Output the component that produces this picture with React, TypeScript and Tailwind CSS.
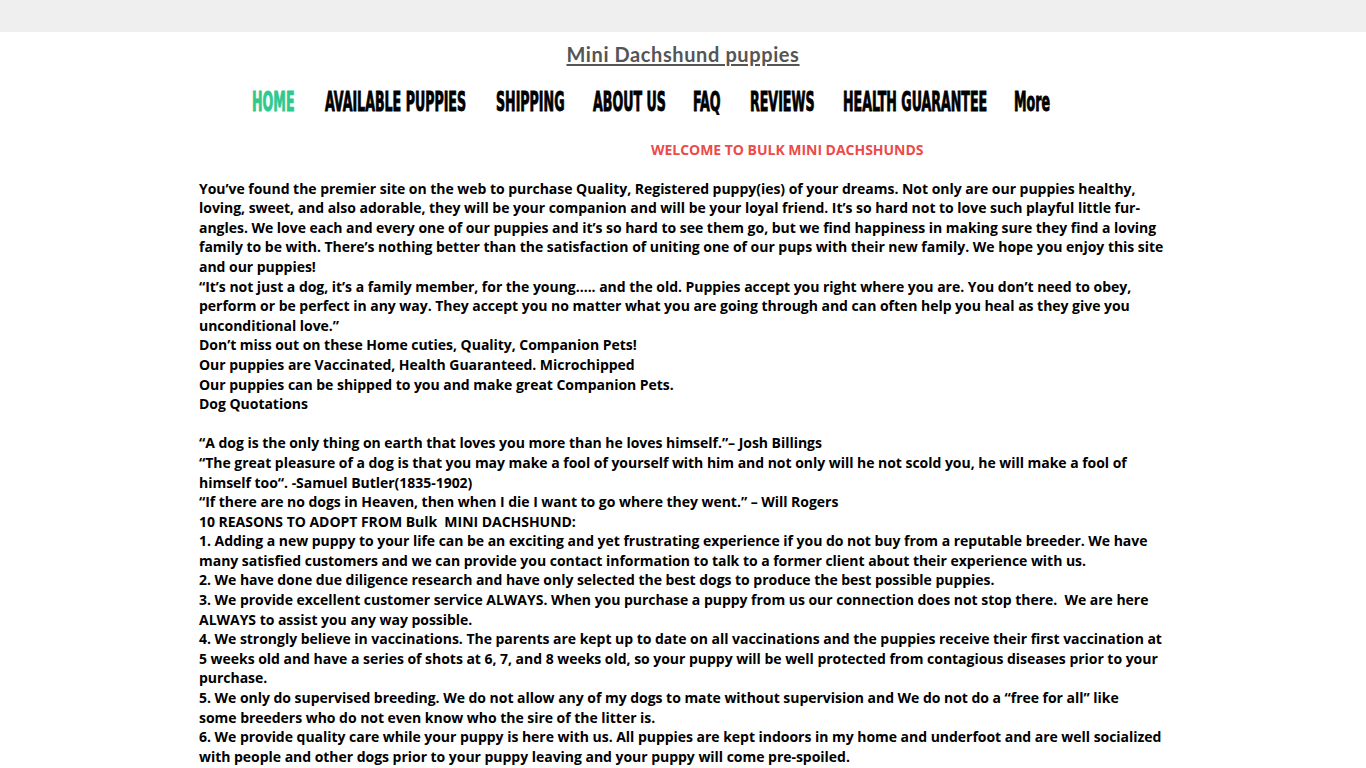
import React from 'react';

const navItems = [
  { label: 'HOME', w: 43 },
  { label: 'AVAILABLE PUPPIES', w: 141 },
  { label: 'SHIPPING', w: 67 },
  { label: 'ABOUT US', w: 70 },
  { label: 'FAQ', w: 27 },
  { label: 'REVIEWS', w: 63 },
  { label: 'HEALTH GUARANTEE', w: 141 },
  { label: 'More', w: 41 },
];

const lines: string[] = [
  'You\u2019ve found the premier site on the web to purchase Quality, Registered puppy(ies) of your dreams. Not only are our puppies healthy, loving, sweet, and also adorable, they will be your companion and will be your loyal friend. It\u2019s so hard not to love such playful little fur-angles. We love each and every one of our puppies and it\u2019s so hard to see them go, but we find happiness in making sure they find a loving family to be with. There\u2019s nothing better than the satisfaction of uniting one of our pups with their new family. We hope you enjoy this site and our puppies!',
  '\u201cIt\u2019s not just a dog, it\u2019s a family member, for the young\u2026.. and the old. Puppies accept you right where you are. You don\u2019t need to obey, perform or be perfect in any way. They accept you no matter what you are going through and can often help you heal as they give you unconditional love.\u201d',
  'Don\u2019t miss out on these Home cuties, Quality, Companion Pets!',
  'Our puppies are Vaccinated, Health Guaranteed. Microchipped',
  'Our puppies can be shipped to you and make great Companion Pets.',
  'Dog Quotations',
  '',
  '\u201cA dog is the only thing on earth that loves you more than he loves himself.\u201d\u2013 Josh Billings',
  '\u201cThe great pleasure of a dog is that you may make a fool of yourself with him and not only will he not scold you, he will make a fool of himself too\u201c. -Samuel Butler(1835-1902)',
  '\u201cIf there are no dogs in Heaven, then when I die I want to go where they went.\u201d \u2013 Will Rogers',
  '10 REASONS TO ADOPT FROM Bulk \u00a0MINI DACHSHUND:',
  '1. Adding a new puppy to your life can be an exciting and yet frustrating experience if you do not buy from a reputable breeder. We have many satisfied customers and we can provide you contact information to talk to a former client about their experience with us.',
  '2. We have done due diligence research and have only selected the best dogs to produce the best possible puppies.',
  '3. We provide excellent customer service ALWAYS. When you purchase a puppy from us our connection does not stop there. \u00a0We are here ALWAYS to assist you any way possible.',
  '4. We strongly believe in vaccinations. The parents are kept up to date on all vaccinations and the puppies receive their first vaccination at 5 weeks old and have a series of shots at 6, 7, and 8 weeks old, so your puppy will be well protected from contagious diseases prior to your purchase.',
  '5. We only do supervised breeding. We do not allow any of my dogs to mate without supervision and We do not do a \u201cfree for all\u201d like\nsome breeders who do not even know who the sire of the litter is.',
  '6. We provide quality care while your puppy is here with us. All puppies are kept indoors in my home and underfoot and are well socialized with people and other dogs prior to your puppy leaving and your puppy will come pre-spoiled.',
];

export default function App() {
  return (
    <div className="min-h-screen bg-white">
      <div className="h-8 bg-[#efefef]" />
      <header className="flex flex-col items-center">
        <a
          href="#"
          className="mt-[9px] text-[20px] leading-[26px] font-bold tracking-[0.6px] text-[#555555] underline underline-offset-2"
          style={{ fontFamily: 'Lato, "Open Sans", sans-serif' }}
        >
          Mini Dachshund puppies
        </a>
        <nav className="mt-[20px] flex items-center gap-[30px] pr-[59px]">
          {navItems.map((item, i) => (
            <a
              key={item.label}
              href="#"
              className={`block h-[30px] overflow-visible whitespace-nowrap ${i === 0 ? 'text-[#2fc88f]' : 'text-black'}`}
              style={{ width: item.w }}
            >
              <span
                className="inline-block origin-left scale-x-[0.54] text-[26px] leading-[30px] font-bold [-webkit-text-stroke-width:0.9px]"
                style={{ fontFamily: '"DejaVu Sans", sans-serif', fontStretch: 'condensed' }}
              >
                {item.label}
              </span>
            </a>
          ))}
        </nav>
      </header>
      <main
        className="mx-auto w-[968px] mt-[23px] text-[14px] leading-[19.6px] font-bold tracking-[-0.03px] text-black"
        style={{ fontFamily: '"Open Sans", sans-serif' }}
      >
        <p className="pl-[452px] text-[#ed4a4a]">WELCOME TO BULK MINI DACHSHUNDS</p>
        <div className="mt-[19px]">
          {lines.map((t, i) => (
            <p key={i} className="min-h-[19.6px] whitespace-pre-line">
              {t}
            </p>
          ))}
        </div>
      </main>
    </div>
  );
}
